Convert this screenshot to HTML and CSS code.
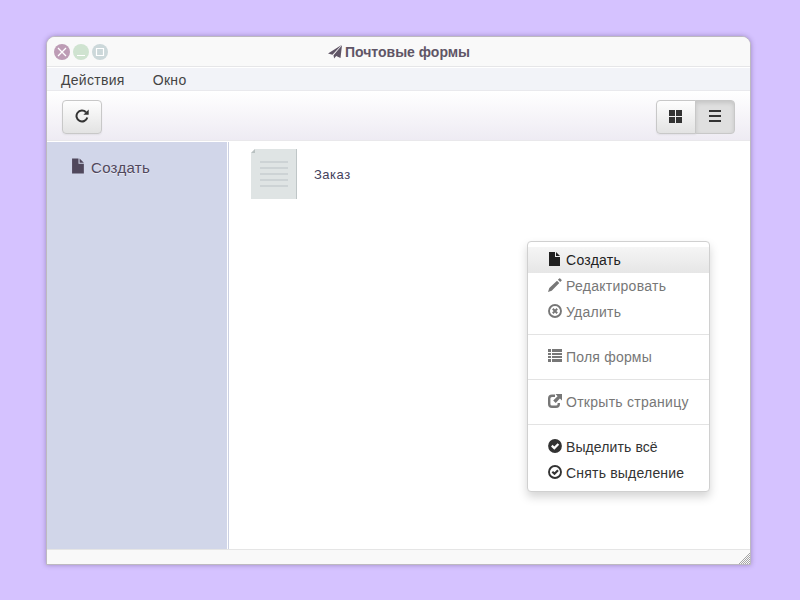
FILE: index.html
```html
<!DOCTYPE html>
<html lang="ru">
<head>
<meta charset="utf-8">
<title>Почтовые формы</title>
<link rel="stylesheet" href="styles.css">
</head>
<body>
<svg class="defs" width="0" height="0">
  <symbol id="file" viewBox="0 0 14 14"><path d="M1 0h6v5h5v9H1zM8 0l4 4H8z"/></symbol>
  <symbol id="pencil" viewBox="0 0 14 14"><path d="M0 14l1.300-3.900L9 2.700l2.300 2.300-7.600 7.700zM9.900 1.800l1.300-1.300q.5-.5 1 0l1.300 1.300q.5.5 0 1l-1.300 1.300z"/></symbol>
  <symbol id="remove" viewBox="0 0 14 14"><circle cx="7" cy="7" r="6" fill="none" stroke="currentColor" stroke-width="1.900"/><path d="M4.800 4.800l4.400 4.400M9.200 4.800L4.800 9.200" stroke="currentColor" stroke-width="2"/></symbol>
  <symbol id="list" viewBox="0 0 14 14"><path d="M0 0h3v3H0zM4 0h10v3H4zM0 4h3v2H0zM4 4h10v2H4zM0 7h3v2H0zM4 7h10v2H4zM0 10h3v3H0zM4 10h10v3H4z"/></symbol>
  <symbol id="share" viewBox="0 0 14 14"><path d="M7 1.700H4Q1.200 1.700 1.200 4.500V10Q1.200 12.800 4 12.800H8Q10.800 12.800 10.800 10V9" fill="none" stroke="currentColor" stroke-width="2.400"/><path d="M7.500 0H14v6.500L11.900 4.500 7.700 8.900 5.200 6.400 9.600 2.200z"/></symbol>
  <symbol id="ok-full" viewBox="0 0 14 14"><circle cx="7" cy="7" r="6.900"/><path d="M3.800 6.700l2.500 2.400 4.100-4.100" fill="none" stroke="#fff" stroke-width="2.300"/></symbol>
  <symbol id="ok-ring" viewBox="0 0 14 14"><circle cx="7" cy="7" r="6" fill="none" stroke="currentColor" stroke-width="1.900"/><path d="M4.300 6.700l2.200 2 3.500-3.500" fill="none" stroke="currentColor" stroke-width="2.200"/></symbol>
</svg>
<div class="window">
  <header class="titlebar">
    <div class="controls">
      <svg class="control" viewBox="0 0 16 16"><circle cx="8" cy="8" r="8" fill="#bd9cb5"/><path d="M4 4l8 8M12 4l-8 8" stroke="#fff" stroke-width="1.300"/></svg>
      <svg class="control" viewBox="0 0 16 16"><circle cx="8" cy="8" r="8" fill="#cfe3d0"/><path d="M4 11.500h8" stroke="#fff"/></svg>
      <svg class="control" viewBox="0 0 16 16"><circle cx="8" cy="8" r="8" fill="#ccd8da"/><path d="M4.500 4.500h7v7h-7z" fill="none" stroke="#fff" stroke-width="1.200"/></svg>
    </div>
    <h1 class="title"><svg class="icon" viewBox="0 0 14 14"><path d="M0 8.500L13.500 0 4.500 9.700zM14 .3L12.500 13 8.200 10.900 6.100 13.500 5.500 10.300z"/></svg><span>Почтовые формы</span></h1>
  </header>
  <nav class="menubar"><span class="actions">Действия</span><span>Окно</span></nav>
  <div class="toolbar">
    <button class="button" aria-label="Обновить"><svg class="icon" viewBox="0 0 14 14"><path d="M12.300 8.500A5.500 5.500 0 1 1 11 3.200" fill="none" stroke="currentColor" stroke-width="2"/><path d="M13.700.4V5.700H8.400z"/></svg></button>
    <div class="group">
      <button class="button" aria-label="Плитка"><svg class="icon" viewBox="0 0 14 14"><path d="M1 1h6v6H1zM8 1h6v6H8zM1 8h6v6H1zM8 8h6v6H8z"/></svg></button>
      <button class="button pressed" aria-label="Список"><svg class="icon" viewBox="0 0 14 14"><path d="M1 1h12v2H1zM1 6h12v2H1zM1 11h12v2H1z"/></svg></button>
    </div>
  </div>
  <div class="body">
    <aside class="sidebar"><a class="create"><svg class="icon"><use href="#file"/></svg><span>Создать</span></a></aside>
    <main class="content">
      <svg class="sheet" viewBox="0 0 46 50"><path d="M4 0h42v50H0V4z" fill="#dfe4e4"/><path d="M4 0v4H0z" fill="#b9c1c1"/><path d="M45.500 0v50" stroke="#bfc6c7"/><path d="M9 13h28M9 19h28M9 25h28M9 31h28M9 37h28" stroke="#cdd3d5" stroke-width="2"/></svg>
      <span class="name">Заказ</span>
    </main>
  </div>
  <footer class="status"><svg class="grip" viewBox="0 0 12 12"><defs><pattern id="dots" width="2" height="2" patternUnits="userSpaceOnUse"><path d="M0 0h1v1H0zM1 1h1v1H1z" fill="#a5a5a5"/></pattern></defs><path d="M12 0v12H0z" fill="url(#dots)"/></svg></footer>
</div>
<ul class="menu">
  <li class="item active"><svg class="icon"><use href="#file"/></svg><span class="wide">Создать</span></li>
  <li class="item disabled"><svg class="icon"><use href="#pencil"/></svg><span class="wide">Редактировать</span></li>
  <li class="item disabled"><svg class="icon"><use href="#remove"/></svg><span class="wide">Удалить</span></li>
  <li class="divider"></li>
  <li class="item disabled"><svg class="icon"><use href="#list"/></svg><span>Поля формы</span></li>
  <li class="divider"></li>
  <li class="item disabled"><svg class="icon"><use href="#share"/></svg><span class="wide">Открыть страницу</span></li>
  <li class="divider"></li>
  <li class="item"><svg class="icon"><use href="#ok-full"/></svg><span class="snug">Выделить всё</span></li>
  <li class="item"><svg class="icon"><use href="#ok-ring"/></svg><span>Снять выделение</span></li>
</ul>
</body>
</html>
```
FILE: styles.css
```css
* { box-sizing: border-box; }
body {
  margin: 0;
  height: 600px;
  padding: 36px 49px 0 46px;
  overflow: hidden;
  background: #d5c2ff;
  font: 14px/20px "Liberation Sans", Arial, sans-serif;
  color: #333;
}
.defs { position: absolute; }
.icon { width: 14px; height: 14px; fill: currentColor; flex: none; }
.window {
  display: flex;
  flex-direction: column;
  height: 529px;
  border: 1px solid #bdb9c0;
  border-radius: 9px 9px 0 0;
  background: #fff;
  box-shadow: 0 0 5px rgba(70, 50, 100, .4);
  overflow: hidden;
}
.titlebar {
  display: grid;
  grid-template-columns: 60px 1fr 60px;
  align-items: center;
  height: 30px;
  padding: 0 7px;
  background: #f9f9f9;
  border-bottom: 1px solid #e6e6e8;
}
.controls { display: flex; gap: 3px; }
.control { width: 16px; height: 16px; flex: none; }
.title {
  display: flex;
  justify-content: center;
  align-items: center;
  gap: 3px;
  margin: 0;
  padding-left: 1px;
  font-size: 14px;
  color: #605566;
}
.menubar {
  display: flex;
  gap: 28px;
  height: 24px;
  padding: 2px 14px 0;
  border-top: 1px solid #fff;
  border-bottom: 1px solid #e9e9ed;
  background: #f2f3f8;
  color: #444;
  letter-spacing: .3px;
}
.toolbar {
  display: flex;
  justify-content: space-between;
  height: 50px;
  padding: 9px 15px 0;
  background: linear-gradient(#fff, #eeebf3);
  border-bottom: 1px solid #e9e8eb;
}
.button {
  display: flex;
  align-items: center;
  justify-content: center;
  width: 40px;
  height: 34px;
  padding: 0 0 2px;
  border: 1px solid #c8c8c8;
  border-radius: 4px;
  background: linear-gradient(#fefefe, #e3e3e3);
  box-shadow: 0 1px 2px rgba(0, 0, 0, .06);
  color: #333;
}
.group { display: flex; }
.group .button { border-radius: 4px 0 0 4px; }
.group .pressed {
  margin-left: -1px;
  border-radius: 0 4px 4px 0;
  background: #dfdfdf;
  box-shadow: inset 0 2px 4px rgba(0, 0, 0, .12);
}
.group .button:first-child .icon { margin-left: -2px; }
.body { display: flex; flex: 1; padding-top: 1px; }
.sidebar {
  width: 182px;
  padding: 16px 24px;
  border-right: 1px solid #ccd1e2;
  background: #d1d6e9;
  box-shadow: inset -1px 0 #fff;
}
.create {
  display: flex;
  align-items: center;
  gap: 5px;
  font-size: 15px;
  color: #50485c;
  letter-spacing: .3px;
  text-shadow: 0 1px rgba(255, 255, 255, .5);
}
.create .icon { width: 15px; height: 16px; margin-top: -4px; }
.content {
  display: flex;
  align-items: flex-start;
  gap: 17px;
  padding: 7px 22px;
}
.sheet { width: 46px; height: 50px; }
.name { padding-top: 16px; font-size: 13px; letter-spacing: .5px; color: #443f5b; }
.status {
  display: flex;
  justify-content: flex-end;
  align-items: flex-end;
  height: 15px;
  border-top: 1px solid #e5e5e5;
  background: #f9f9f9;
}
.grip { width: 12px; height: 12px; }
.menu {
  position: absolute;
  left: 527px;
  top: 241px;
  width: 183px;
  margin: 0;
  padding: 5px 0;
  border: 1px solid #d0d0d0;
  border-radius: 4px;
  background: #fff;
  box-shadow: 0 5px 10px rgba(0, 0, 0, .17);
  list-style: none;
  letter-spacing: .2px;
}
.wide { letter-spacing: .27px; }
.snug { letter-spacing: .1px; }
.item {
  display: flex;
  align-items: center;
  gap: 4px;
  height: 26px;
  padding: 0 20px;
  white-space: nowrap;
}
.item .icon { margin-top: -2px; }
.active { background: linear-gradient(#f5f5f5, #e6e6e6); color: #222; }
.disabled { color: #777; }
.divider { height: 1px; margin: 9px 0; background: #e3e3e3; }
```
